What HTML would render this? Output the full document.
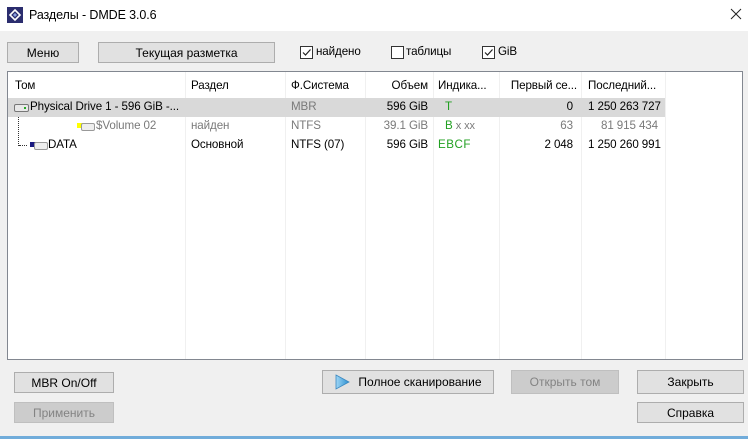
<!DOCTYPE html>
<html><head><meta charset="utf-8"><style>
*{margin:0;padding:0;box-sizing:border-box}
body{width:748px;height:439px;background:#f0f0f0;font-family:"Liberation Sans","DejaVu Sans",sans-serif;font-size:12px;color:#000;position:relative;overflow:hidden}
.abs{position:absolute}
.title{left:0;top:0;width:748px;height:31px;background:#fff}
.btn{position:absolute;background:#e1e1e1;border:1px solid #adadad;text-align:center;font-size:12px;display:flex;align-items:center;justify-content:center}
.dis{background:#cccccc;border-color:#bfbfbf;color:#838383}
.cb{position:absolute;width:13px;height:13px;border:1px solid #333;background:#fff}
.list{left:7px;top:71px;width:736px;height:289px;background:#fff;border:1px solid #828790}
.sep{position:absolute;top:0;width:1px;height:287px;background:#f0f0f0}
.t{position:absolute;white-space:nowrap;font-size:11.6px;letter-spacing:-0.1px}
.r{text-align:right}
.g{color:#7a7a7a}
.gr{color:#22a022}
</style></head><body>
<div class="abs title"></div>
<svg class="abs" style="left:7px;top:7px" width="16" height="16"><rect width="16" height="16" fill="#2b2d6e"/><path d="M8 3 L13 8 L8 13 L3 8Z" fill="none" stroke="#fff" stroke-width="1.6"/><path d="M8 6 L10 8 L8 10 L6 8Z" fill="#8aa0e0"/></svg>
<div class="t" style="left:29px;top:8px;font-size:12.5px">Разделы - DMDE 3.0.6</div>
<svg class="abs" style="left:730px;top:8px" width="12" height="12"><path d="M1 1L11 11M11 1L1 11" stroke="#222" stroke-width="1"/></svg>

<div class="btn" style="left:7px;top:42px;width:72px;height:21px">Меню</div>
<div class="btn" style="left:98px;top:42px;width:177px;height:21px">Текущая разметка</div>
<div class="cb" style="left:300px;top:46px"></div><svg class="abs" style="left:301px;top:47px" width="11" height="11"><path d="M2 5.5L4.5 8L9.5 2.5" fill="none" stroke="#222" stroke-width="1.2"/></svg>
<div class="t" style="left:316px;top:45px">найдено</div>
<div class="cb" style="left:391px;top:46px"></div>
<div class="t" style="left:406px;top:45px">таблицы</div>
<div class="cb" style="left:482px;top:46px"></div><svg class="abs" style="left:483px;top:47px" width="11" height="11"><path d="M2 5.5L4.5 8L9.5 2.5" fill="none" stroke="#222" stroke-width="1.2"/></svg>
<div class="t" style="left:498px;top:45px">GiB</div>

<div class="abs list">
<div class="sep" style="left:177px"></div><div class="sep" style="left:277px"></div><div class="sep" style="left:357px"></div><div class="sep" style="left:425px"></div><div class="sep" style="left:491px"></div><div class="sep" style="left:573px"></div><div class="sep" style="left:657px"></div>
<div class="abs" style="left:0;top:26px;width:657px;height:19px;background:#d9d9d9"></div>
<div class="t" style="left:7px;top:7px">Том</div>
<div class="t" style="left:183px;top:7px">Раздел</div>
<div class="t" style="left:283px;top:7px">Ф.Система</div>
<div class="t r" style="left:357px;top:7px;width:63px">Объем</div>
<div class="t" style="left:430px;top:7px">Индика...</div>
<div class="t r" style="left:491px;top:7px;width:78px">Первый се...</div>
<div class="t" style="left:580px;top:7px">Последний...</div>
<div class="abs" style="left:6px;top:32px;width:15px;height:8px;background:#e8e8e8;border:1px solid #777;border-radius:2px"></div>
<div class="abs" style="left:16px;top:35px;width:2px;height:2px;background:#2a2"></div>
<div class="t" style="left:22px;top:28px">Physical Drive 1 - 596 GiB -...</div>
<div class="t g" style="left:283px;top:28px">MBR</div>
<div class="t r" style="left:357px;top:28px;width:63px">596 GiB</div>
<div class="t gr" style="left:437px;top:28px">T</div>
<div class="t r" style="left:491px;top:28px;width:74px">0</div>
<div class="t" style="left:580px;top:28px">1 250 263 727</div>
<div class="abs" style="left:10px;top:45px;height:29px;border-left:1px dotted #333"></div>
<div class="abs" style="left:11px;top:73px;width:8px;border-top:1px dotted #333"></div>
<div class="abs" style="left:69px;top:51px;width:6px;height:5px;background:#ff0"></div>
<div class="abs" style="left:73px;top:51px;width:14px;height:8px;background:#eee;border:1px solid #999;border-radius:2px"></div>
<div class="t g" style="left:88px;top:47px">$Volume 02</div>
<div class="t g" style="left:183px;top:47px">найден</div>
<div class="t g" style="left:283px;top:47px">NTFS</div>
<div class="t r g" style="left:357px;top:47px;width:63px">39.1 GiB</div>
<div class="t" style="left:437px;top:47px"><span class="gr">B</span> <span class="g" style="font-size:11px">x xx</span></div>
<div class="t r g" style="left:491px;top:47px;width:74px">63</div>
<div class="t r g" style="left:573px;top:47px;width:77px">81 915 434</div>
<div class="abs" style="left:22px;top:70px;width:6px;height:5px;background:#1a1a80"></div>
<div class="abs" style="left:26px;top:70px;width:14px;height:8px;background:#eee;border:1px solid #999;border-radius:2px"></div>
<div class="t" style="left:40px;top:66px">DATA</div>
<div class="t" style="left:183px;top:66px">Основной</div>
<div class="t" style="left:283px;top:66px">NTFS (07)</div>
<div class="t r" style="left:357px;top:66px;width:63px">596 GiB</div>
<div class="t gr" style="left:430px;top:66px;letter-spacing:0.5px">EBCF</div>
<div class="t r" style="left:491px;top:66px;width:74px">2 048</div>
<div class="t" style="left:580px;top:66px">1 250 260 991</div>
</div>

<div class="btn" style="left:14px;top:372px;width:100px;height:21px">MBR On/Off</div>
<div class="btn dis" style="left:14px;top:402px;width:100px;height:21px">Применить</div>
<div class="btn" style="left:322px;top:370px;width:172px;height:24px"><svg width="16" height="16" style="margin-right:8px"><defs><linearGradient id="a" x1="0" x2="1"><stop offset="0" stop-color="#9fd6f5"/><stop offset="1" stop-color="#2a8fd0"/></linearGradient></defs><path d="M2 1L15 8L2 15Z" fill="url(#a)" stroke="#3a88c0" stroke-width="0.8"/></svg>Полное сканирование</div>
<div class="btn dis" style="left:511px;top:370px;width:108px;height:24px">Открыть том</div>
<div class="btn" style="left:637px;top:370px;width:107px;height:24px">Закрыть</div>
<div class="btn" style="left:637px;top:402px;width:107px;height:21px">Справка</div>
<div class="abs" style="left:0;top:436px;width:748px;height:3px;background:#3a8fd0;opacity:.7"></div>
</body></html>
